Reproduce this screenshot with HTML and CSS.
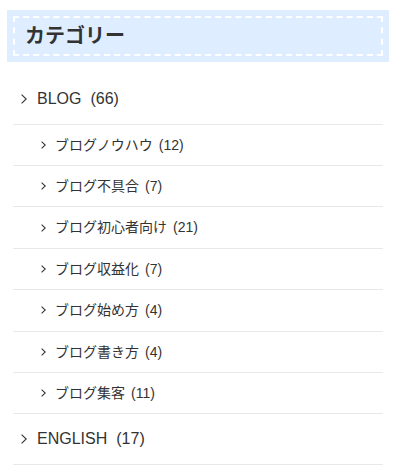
FILE: index.html
```html
<!DOCTYPE html>
<html lang="ja">
<head>
    <meta charset="UTF-8">
    <meta name="viewport" content="width=device-width, initial-scale=1.0">
    <title>カテゴリー</title>
    <link rel="stylesheet" href="styles.css">
</head>
<body>

    <div class="widget">
        <div class="widget-title">
            <h3>カテゴリー</h3>
        </div>
        <ul class="cat-list">
            <li class="cat-item">
                <a href="#"><svg class="arrow" viewBox="0 0 6 10"><polyline points="0.6,0.6 5.2,5 0.6,9.4" /></svg>BLOG<span class="count">(66)</span></a>
                <ul class="children">
                    <li><a href="#"><svg class="arrow" viewBox="0 0 5 8"><polyline points="0.6,0.6 4.3,4 0.6,7.4" /></svg>ブログノウハウ<span class="count">(12)</span></a></li>
                    <li><a href="#"><svg class="arrow" viewBox="0 0 5 8"><polyline points="0.6,0.6 4.3,4 0.6,7.4" /></svg>ブログ不具合<span class="count">(7)</span></a></li>
                    <li><a href="#"><svg class="arrow" viewBox="0 0 5 8"><polyline points="0.6,0.6 4.3,4 0.6,7.4" /></svg>ブログ初心者向け<span class="count">(21)</span></a></li>
                    <li><a href="#"><svg class="arrow" viewBox="0 0 5 8"><polyline points="0.6,0.6 4.3,4 0.6,7.4" /></svg>ブログ収益化<span class="count">(7)</span></a></li>
                    <li><a href="#"><svg class="arrow" viewBox="0 0 5 8"><polyline points="0.6,0.6 4.3,4 0.6,7.4" /></svg>ブログ始め方<span class="count">(4)</span></a></li>
                    <li><a href="#"><svg class="arrow" viewBox="0 0 5 8"><polyline points="0.6,0.6 4.3,4 0.6,7.4" /></svg>ブログ書き方<span class="count">(4)</span></a></li>
                    <li><a href="#"><svg class="arrow" viewBox="0 0 5 8"><polyline points="0.6,0.6 4.3,4 0.6,7.4" /></svg>ブログ集客<span class="count">(11)</span></a></li>
                </ul>
            </li>
            <li class="cat-item">
                <a href="#"><svg class="arrow" viewBox="0 0 6 10"><polyline points="0.6,0.6 5.2,5 0.6,9.4" /></svg>ENGLISH<span class="count">(17)</span></a>
            </li>
        </ul>
    </div>

</body>
</html>
```
FILE: styles.css
```css
body {
    margin: 0;
    font-family: "Liberation Sans", "Noto Sans CJK JP", sans-serif;
    color: #333;
    background-color: #fff;
}

.widget {
    padding: 10px 14px 0 7px;
}

.widget-title {
    background-color: #deedff;
    padding: 6px;
}

.widget-title h3 {
    margin: 0;
    padding: 3px 10px;
    border: 2px dashed #fff;
    font-size: 20px;
    line-height: 30px;
    font-weight: bold;
    color: #333;
}

.cat-list {
    list-style: none;
    margin: 12px 6px 0 6px;
    padding: 0;
}

.cat-list a {
    display: flex;
    align-items: center;
    color: #333;
    text-decoration: none;
}

.cat-item > a {
    padding: 12px 0 12px 8px;
    font-size: 16px;
    line-height: 25.6px;
    border-bottom: 1px solid #e8e8e8;
}

.children {
    list-style: none;
    margin: 0;
    padding: 0;
}

.children a {
    padding: 9px 0 9px 28px;
    font-size: 14px;
    line-height: 22.4px;
    border-bottom: 1px solid #e8e8e8;
}

.arrow {
    width: 6px;
    height: 10px;
    margin-right: 10px;
    flex-shrink: 0;
}

.arrow polyline {
    fill: none;
    stroke: #333;
    stroke-width: 1.1;
}

.children .arrow {
    width: 5px;
    height: 8px;
    margin-right: 9px;
}

.count {
    margin-left: 9px;
}

.children .count {
    margin-left: 6px;
}
```
